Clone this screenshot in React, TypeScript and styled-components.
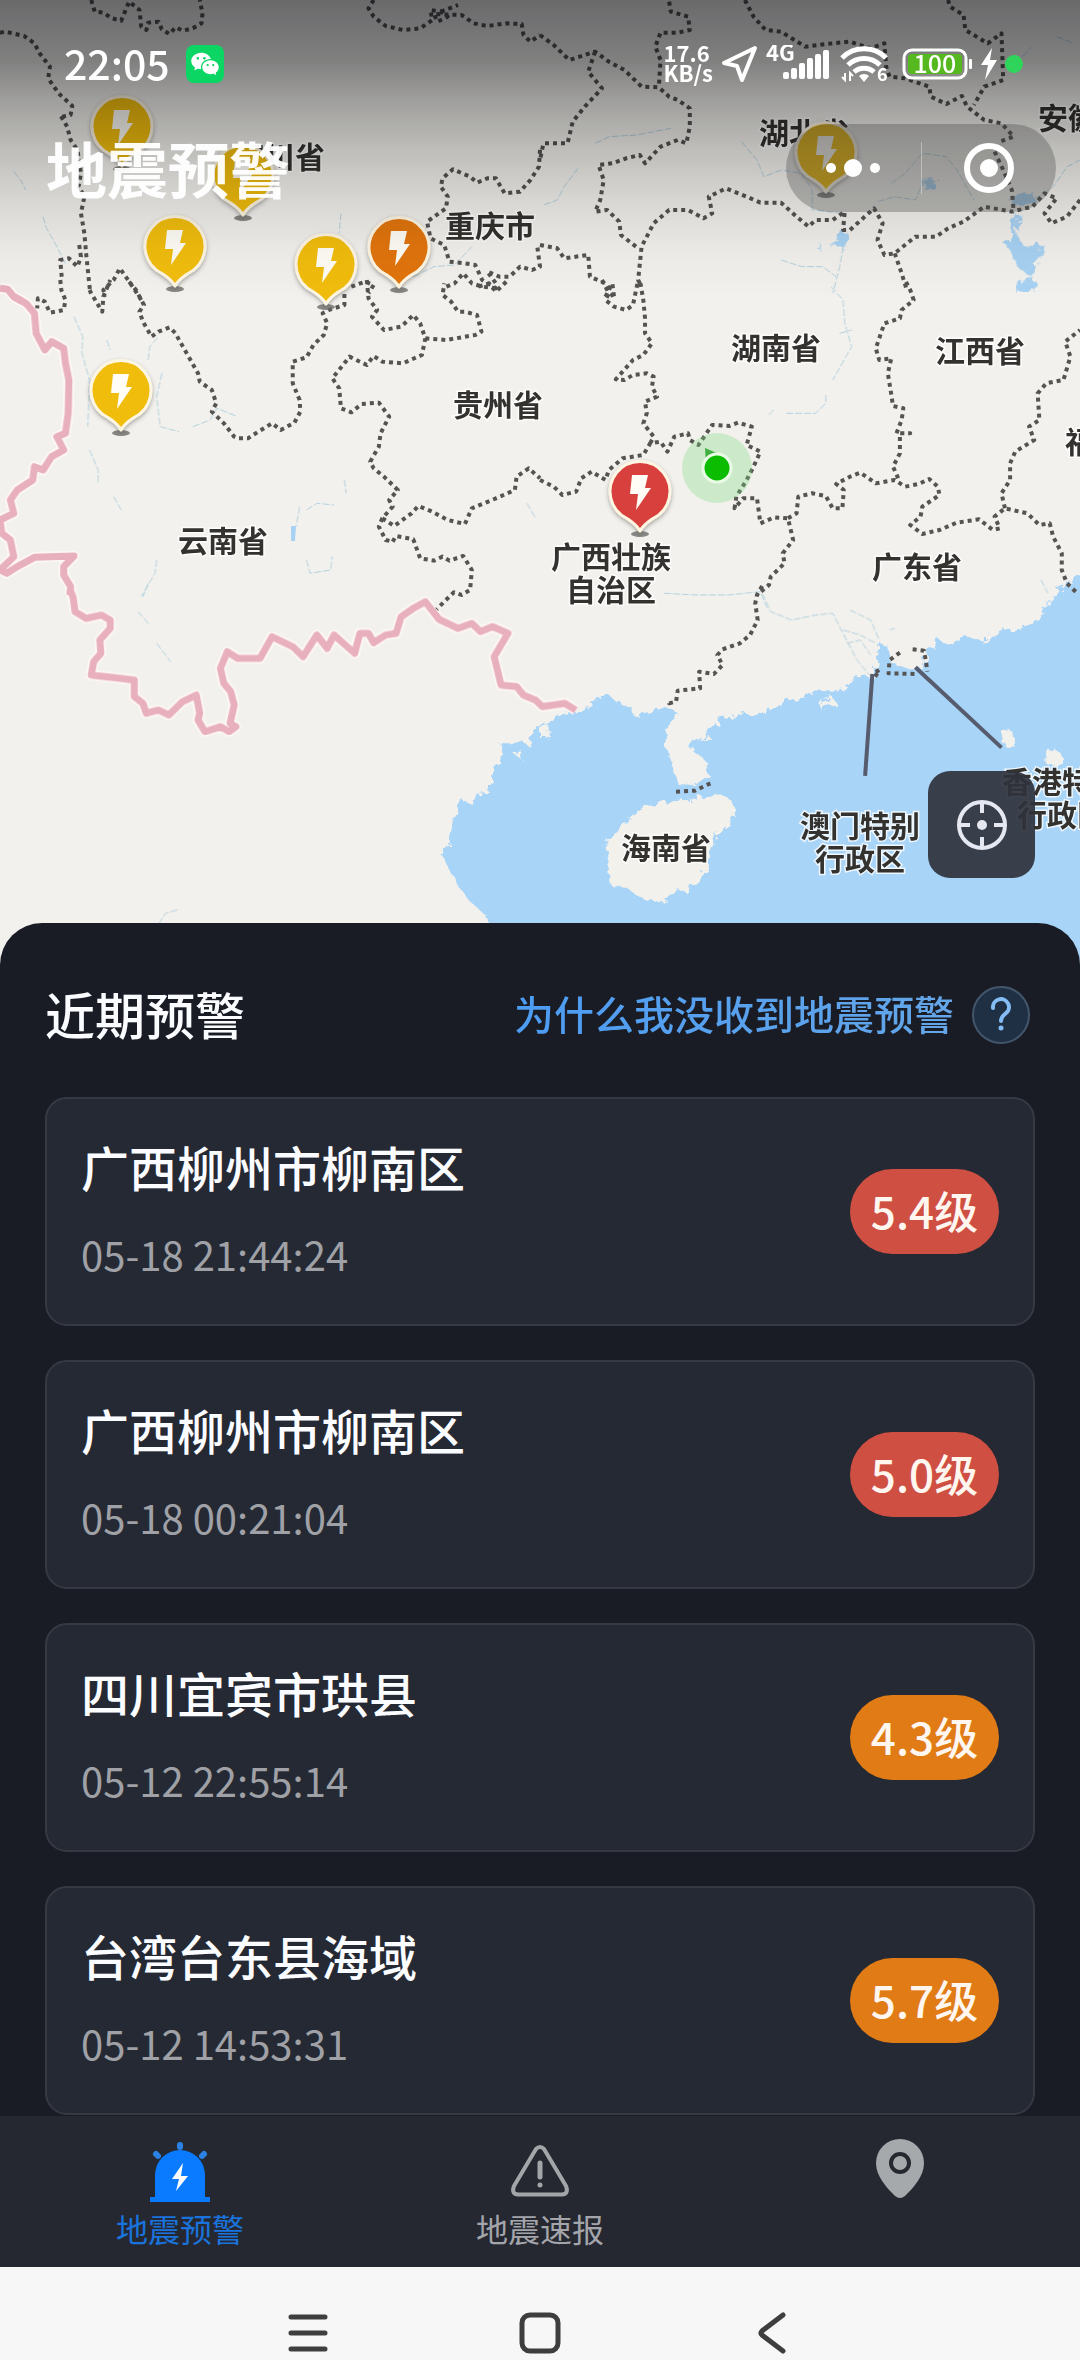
import React from 'react';
import styled, { createGlobalStyle } from 'styled-components';
import { RiWechatFill } from 'react-icons/ri';

const GlobalStyle = createGlobalStyle`
    * {
        box-sizing: border-box;
    }

    body {
        margin: 0;
        background: #191c25;
        font-family: "Noto Sans CJK SC", "Noto Sans", sans-serif;
    }

    button {
        padding: 0;
        border: 0;
        background: none;
        font: inherit;
        color: inherit;
    }

    svg {
        display: block;
        flex: none;
    }
`;

const Page = styled.div`
    display: flex;
    flex-direction: column;
    height: 100vh;
    overflow: hidden;
`;

const MapArea = styled.section`
    position: relative;
    flex: none;
    height: 966px;
    overflow: hidden;
    background: #f2f1ed;
`;

const MapDrawing = styled.svg`
    width: 100%;
    height: 100%;

    path, line {
        vector-effect: non-scaling-stroke;
    }
`;

const MapLabel = styled.text`
    font-size: 30px;
    font-weight: 700;
    fill: #33322f;
    stroke: #fff;
    stroke-width: 3px;
    stroke-opacity: 0.8;
    paint-order: stroke;
    text-anchor: middle;
`;

const Header = styled.header`
    position: absolute;
    top: 0;
    left: 0;
    right: 0;
    height: 300px;
    color: #fff;
    background: linear-gradient(
        rgba(0, 0, 6, 0.56) 0px,
        rgba(0, 0, 4, 0.47) 60px,
        rgba(0, 0, 2, 0.34) 100px,
        rgba(0, 0, 0, 0.21) 150px,
        rgba(0, 0, 0, 0.11) 200px,
        rgba(0, 0, 0, 0.03) 250px,
        rgba(0, 0, 0, 0) 300px
    );
`;

const StatusBar = styled.div`
    display: flex;
    align-items: center;
    justify-content: space-between;
    height: 124px;
    padding: 4px 57px 0 64px;
`;

const StatusGroup = styled.div<{ gap: number }>`
    display: flex;
    align-items: center;
    gap: ${props => props.gap}px;
`;

const Clock = styled.span`
    padding-bottom: 4px;
    font-size: 41px;
    font-weight: 500;
    line-height: 44px;
`;

const WechatBadge = styled.span`
    display: flex;
    align-items: center;
    justify-content: center;
    width: 38px;
    height: 38px;
    border-radius: 8px;
    background: #0bd563;
    font-size: 30px;
`;

const NetSpeed = styled.span`
    padding-bottom: 4px;
    font-size: 22px;
    font-weight: 700;
    line-height: 20px;
`;

const GreenDot = styled.span`
    width: 18px;
    height: 18px;
    border-radius: 50%;
    background: #2fd45b;
`;

const TitleBar = styled.div`
    display: flex;
    align-items: center;
    justify-content: space-between;
    height: 88px;
    padding: 0 24px 0 46px;
`;

const AppTitle = styled.h1`
    margin: 0;
    font-size: 61px;
    font-weight: 700;
    line-height: 88px;
    opacity: 0.95;
`;

const Capsule = styled.div`
    display: flex;
    align-items: center;
    width: 270px;
    height: 88px;
    border-radius: 44px;
    background: rgba(70, 70, 70, 0.34);
`;

const CapsuleButton = styled.button`
    display: flex;
    flex: 1;
    align-items: center;
    justify-content: center;
    height: 52px;

    & + & {
        border-left: 1px solid rgba(255, 255, 255, 0.35);
    }
`;

const LocateButton = styled.button`
    position: absolute;
    right: 45px;
    bottom: 88px;
    display: flex;
    align-items: center;
    justify-content: center;
    width: 107px;
    height: 107px;
    border-radius: 22px;
    background: rgba(47, 50, 60, 0.92);
`;

const Sheet = styled.main`
    position: relative;
    flex: 1;
    min-height: 0;
    margin-top: -43px;
    padding: 60px 45px 0;
    border-radius: 42px 42px 0 0;
    background: #191c25;
    overflow: hidden;
`;

const SheetHeader = styled.div`
    display: flex;
    align-items: center;
    justify-content: space-between;
    height: 64px;
    padding-right: 5px;
    margin-bottom: 50px;
`;

const SheetTitle = styled.h2`
    margin: 0;
    padding-bottom: 4px;
    font-size: 50px;
    font-weight: 500;
    line-height: 60px;
    color: #fafcff;
`;

const HelpLink = styled.a`
    display: flex;
    align-items: center;
    gap: 18px;
    text-decoration: none;
`;

const HelpText = styled.span`
    padding-bottom: 4px;
    font-size: 40px;
    font-weight: 500;
    line-height: 60px;
    color: transparent;
    background: linear-gradient(90deg, #4c9cf3, #64a6e8);
    background-clip: text;
`;

const HelpIcon = styled.span`
    display: flex;
    align-items: center;
    justify-content: center;
    width: 58px;
    height: 58px;
    border: 2px solid #41566b;
    border-radius: 50%;
    background: #1f3044;
`;

const AlertList = styled.ul`
    display: flex;
    flex-direction: column;
    gap: 34px;
    margin: 0;
    padding: 0;
    list-style: none;
`;

const AlertCard = styled.li`
    display: flex;
    align-items: center;
    justify-content: space-between;
    height: 229px;
    padding: 0 34px;
    border: 2px solid #363943;
    border-radius: 22px;
    background: #252933;
`;

const AlertText = styled.div`
    padding-bottom: 4px;
`;

const AlertPlace = styled.div`
    margin-bottom: 32px;
    font-size: 48px;
    font-weight: 500;
    line-height: 56px;
    color: #fafcff;
`;

const AlertTime = styled.time`
    display: block;
    font-size: 40px;
    line-height: 56px;
    color: #9fa1a6;
`;

const Magnitude = styled.span<{ color: string }>`
    display: flex;
    align-items: center;
    justify-content: center;
    width: 149px;
    height: 85px;
    padding-bottom: 4px;
    border-radius: 43px;
    font-size: 44px;
    font-weight: 500;
    color: #fff6ef;
    background: ${props => props.color};
`;

const TabBar = styled.nav`
    display: flex;
    flex: none;
    height: 151px;
    background: #252831;
`;

const Tab = styled.button<{ active?: boolean }>`
    display: flex;
    flex: 1;
    flex-direction: column;
    align-items: center;
    padding-top: 20px;
    color: ${props => props.active ? '#1a73dc' : '#a3a5ab'};
`;

const TabLabel = styled.span`
    font-size: 32px;
    font-weight: 400;
    line-height: 48px;
`;

const SystemNav = styled.div`
    display: flex;
    flex: none;
    align-items: flex-start;
    justify-content: center;
    gap: 190px;
    height: 93px;
    padding-top: 45px;
    background: #f7f7f7;
    overflow: hidden;
`;

interface MapTile {
    x: number;
    y: number;
    paths: string[];
}

// One map tile covers 540px of the map; its points run 0-1568 across and 3 to a pixel down.
const TILE_SCALE = 'scale(0.3444 0.3333)';

const borderTiles: MapTile[] = [
    {
        x: 0, y: 0, paths: [
            '265,0 275,35 300,38 325,55 352,62 375,5 405,30 410,80 425,90 430,68 460,65 470,88 492,102 510,82 530,92 560,85 585,70 588,40 580,0',
            '0,98 15,95 70,108 100,130 115,160 145,200 140,235 170,280 210,318 205,345 180,350 175,345 195,380 205,420 225,450 235,520 228,560 245,590 235,640 245,700 250,760 262,880',
            '1085,0 1070,25 1085,50 1120,78 1170,90 1220,85 1255,60 1250,30 1280,35 1300,50 1270,65 1260,42 1340,45 1375,70 1415,78 1470,70 1515,72 1520,105 1540,125 1568,105',
            '1280,35 1330,15',
            '1568,450 1565,500 1540,540 1510,575 1465,580 1440,535 1415,535 1385,548 1365,530 1315,508 1285,535 1280,560 1300,590 1295,625 1240,665 1250,715 1290,735 1305,785 1350,790 1380,795 1400,840 1440,865 1440,850 1415,815 1450,830 1480,830 1510,800 1545,810 1568,800 1560,740',
            '1440,865 1400,860 1370,850 1345,820 1320,850 1285,865',
            '1020,860 1060,845 1085,855 1070,880',
            '230,735 235,770 225,800 200,775 175,780 180,840',
            '410,900 385,860 348,805 330,840 300,870 305,890',
        ],
    },
    {
        x: 540, y: 0, paths: [
            '0,105 40,135 85,180 160,155 200,185 245,210 295,260 345,262 375,290 400,300 435,325 435,380 425,430 400,420 350,440 305,490 290,465 250,475 210,490 170,495 185,540 175,600 160,635 195,630 230,665 235,705 285,745',
            '375,5 380,35 430,50 435,90 400,98 350,98 335,140 350,180 345,262',
            '160,155 140,215 180,265 130,320 95,365 80,430 10,430 0,480',
            '595,0 620,50 655,90 700,95 770,140 830,132 900,125 960,145 1000,130 1005,200 1015,230 1060,235 1130,260 1135,290 1180,312 1225,288 1240,320 1290,360 1340,370 1375,410 1335,425',
            '1320,455 1345,510 1370,570 1375,630',
            '1185,0 1190,20 1230,45 1235,90 1300,130 1340,100 1345,240 1290,260 1260,315',
            '0,735 50,745 70,775 140,765 145,830 190,850 215,895',
            '290,850 285,840 295,740 330,670 375,630 430,630 475,655 500,640 490,590 540,565 600,590 640,608 700,608 745,650 780,680 800,660 850,660 885,635 880,690 900,690 970,625 995,670 980,720 1000,765 1030,760 1090,710 1150,710 1185,685 1230,665 1290,620 1370,635 1430,620 1465,580 1500,595 1465,640 1485,670 1530,650 1568,600',
            '1030,760 1050,820 1065,870',
        ],
    },
    {
        x: 0, y: 280, paths: [
            '175,0 178,30 190,60 185,90 145,98 130,65 110,55 108,85',
            '260,30 265,40 285,75 297,95 300,50 320,0',
            '375,5 395,30 418,75 405,95 415,125 440,170 460,155 492,142 510,160 520,180 545,225 575,280 580,305 615,330 628,370 615,395 650,430 680,470 690,475 720,475 750,455 790,430 815,450 855,428 872,395 870,360 850,310 850,245 890,232 910,195 940,165 950,130 937,100 960,88 1000,75 1000,40',
            '1065,0 1070,55 1095,90 1080,110 1115,150 1165,140 1200,105 1220,130 1235,175 1225,225 1170,250 1110,245 1085,228 1065,255 1015,230 965,295 985,325 990,385 1020,397 1050,372 1100,368 1130,410 1105,460 1100,500 1075,545 1085,565 1115,590 1155,630 1130,660 1140,680 1110,715 1100,740 1120,780 1140,785',
            '1110,715 1145,738 1195,700 1215,678 1255,695 1300,720 1350,732 1370,685 1440,655 1495,630 1500,590 1535,565 1568,595',
            '1140,785 1150,768 1200,778 1220,835 1260,842 1285,830 1305,842 1345,828 1370,870 1365,930 1340,945 1318,937 1290,965 1268,988',
            '1235,175 1295,180 1380,165 1398,155 1385,105 1350,95 1330,95 1310,65 1285,45 1290,10',
            '1390,20 1420,10 1440,35 1470,5',
        ],
    },
    {
        x: 540, y: 280, paths: [
            '0,600 40,620 65,645 105,635 120,595 150,575 190,600 200,570 240,535 300,525 320,490 350,485 370,515 390,470 430,460 435,480 460,495 500,435 550,438 575,428 615,440 600,495 640,515 620,560 600,600 570,650 565,685 590,655 630,655 640,730 680,712 720,715 735,780 705,820 710,850 670,890 665,915 630,945',
            '320,490 330,470 300,430 310,400 305,365 340,350 325,320 330,290 310,280 270,285 245,300 220,298 270,240 300,225 325,190 305,160 305,115 300,60 290,0',
            '180,0 200,40 190,60 215,80 250,90 270,75 285,0',
            '190,50 210,10 215,50',
            '720,715 745,700 750,650 790,640 830,648 850,685 878,685 882,630 860,612 900,590 930,578 975,610 1030,600 1060,620 1100,612 1130,597 1155,620 1160,645 1110,680 1105,710 1075,735 1110,762 1160,750 1210,728 1275,718 1315,750 1335,745 1320,710 1350,685 1415,700 1450,735 1480,730 1490,770 1515,820 1515,870 1530,910 1560,940',
            '1040,595 1025,560 1045,520 1045,460 1075,460 1035,460 1050,420 1055,385 1025,378 1018,330 1010,280 1020,235 985,240 975,205 1000,130 1045,115 1050,90 1085,60 1075,30 1060,0',
            '1350,685 1340,640 1365,600 1365,550 1380,515 1435,480 1420,440 1450,420 1445,340 1470,310 1520,300 1540,230 1525,185 1568,150',
        ],
    },
    {
        x: 540, y: 580, paths: [
            '645,18 630,45 625,70 632,120 610,165 580,190 530,208 515,225 530,255 505,282 462,275 465,325 400,332 395,365 375,370 375,360',
            '1045,218 1015,240 1012,280 1095,282',
            '1082,208 1115,212 1120,240 1125,275',
            '985,270 968,280 985,290',
            '395,635 450,632 505,605',
        ],
    },
];

const nationTiles: MapTile[] = [
    { x: 0, y: 0, paths: ['0,865 22,868 40,890 66,905'] },
    {
        x: 0, y: 280, paths: [
            '40,50 75,70 100,100 105,160 130,210 150,185 185,205 190,250 200,300 198,400 190,460 165,470 185,510 150,530 125,570 100,560 95,600 50,630 30,660 40,700 0,720 5,760 30,780 40,830 0,870 20,880 50,860 100,832 215,828 185,860 185,885 205,920 203,945',
        ],
    },
    {
        x: 0, y: 580, paths: [
            '203,30 212,50 218,95 250,115 295,105 320,120 320,145 290,180 293,220 272,245 265,285 350,295 390,300 390,350 415,370 425,400 460,390 490,405 530,365 570,345 580,400 575,420 595,455 640,440 665,455 685,440 668,430 680,375 670,335 650,310 640,265 660,215 690,235 755,235 790,170 850,200 880,230 920,165 950,205 970,165 1030,220 1045,160 1070,160 1085,188 1120,165 1150,160 1165,110 1200,85 1235,65 1275,118 1330,145 1370,130 1395,155 1430,140 1475,160 1435,230 1455,315 1500,320 1520,345 1555,360 1575,380 1640,370 1672,390',
        ],
    },
];

const riverTiles: MapTile[] = [
    {
        x: 0, y: 0, paths: [
            '40,515 60,540 75,570', '125,650 135,685 160,730 190,790', '990,640 985,700', '1150,815 1200,830 1260,800 1320,795 1370,740',
        ],
    },
    {
        x: 540, y: 0, paths: [
            '160,430 200,410 280,405 380,385', '110,505 70,560 50,600 10,615', '585,425 630,480 650,530 700,510 760,520 790,570 790,630 880,640',
            '980,605 1030,590 1090,600 1110,550 1160,540', '1020,550 1060,520 1110,460 1180,470 1210,510 1260,600', '1360,600 1450,590 1490,560 1530,500 1568,480',
            '700,780 760,800 820,800 860,830', '880,740 870,800 850,880', '1400,170 1430,140', '1500,110 1550,130',
        ],
    },
    {
        x: 0, y: 280, paths: [
            '215,110 240,170 238,220 260,300 255,440', '260,510 285,570 285,610', '310,180 320,210', '430,240 435,200 460,170', '470,280 455,350 465,440 520,455',
            '560,440 610,420 630,385 690,410', '330,650 352,690', '870,680 860,740', '1000,600 1005,640', '890,690 920,670 970,675', '455,840 450,880 410,950',
            '890,840 900,880 960,870 965,830', '1530,670 1555,715',
        ],
    },
    {
        x: 540, y: 280, paths: [
            '845,20 880,60 885,130 905,200 850,300', '870,160 905,150', '665,405 682,385', '715,400 800,400 830,370 830,340', '360,940 450,945 550,945 640,935 660,985',
        ],
    },
    {
        x: 540, y: 580, paths: [
            '645,40 670,95 730,120 800,105 850,100 880,160 920,240 960,290', '880,150 930,165 975,190', '900,90 960,120 985,180', '1455,0 1475,40',
            '890,190 930,180 960,225', '1015,150 1030,145',
        ],
    },
    { x: 0, y: 580, paths: ['400,95 435,135', '455,190 495,245', '430,10 415,50', '515,990 480,1000 462,1030'] },
];

const mapLabels = [
    { x: 280, y: 157, text: '四川省' },
    { x: 490, y: 226, text: '重庆市' },
    { x: 804, y: 133, text: '湖北省' },
    { x: 1083, y: 118, text: '安徽省' },
    { x: 776, y: 348, text: '湖南省' },
    { x: 980, y: 351, text: '江西省' },
    { x: 498, y: 405, text: '贵州省' },
    { x: 1110, y: 442, text: '福建省' },
    { x: 223, y: 541, text: '云南省' },
    { x: 611, y: 557, text: '广西壮族' },
    { x: 611, y: 590, text: '自治区' },
    { x: 917, y: 567, text: '广东省' },
    { x: 666, y: 848, text: '海南省' },
    { x: 860, y: 826, text: '澳门特别' },
    { x: 860, y: 859, text: '行政区' },
    { x: 1062, y: 782, text: '香港特别' },
    { x: 1062, y: 815, text: '行政区' },
];

const YELLOW = '#f1bd0b';
const ORANGE = '#e2740a';
const RED = '#d8403d';

const pins = [
    { x: 122, y: 126, color: YELLOW },
    { x: 243, y: 175, color: YELLOW },
    { x: 175, y: 246, color: YELLOW },
    { x: 326, y: 264, color: YELLOW },
    { x: 399, y: 247, color: ORANGE },
    { x: 826, y: 152, color: YELLOW },
    { x: 121, y: 390, color: YELLOW },
    { x: 640, y: 491, color: RED },
];

const alerts = [
    { place: '广西柳州市柳南区', time: '05-18 21:44:24', level: '5.4级', color: '#cf4f43' },
    { place: '广西柳州市柳南区', time: '05-18 00:21:04', level: '5.0级', color: '#cf4f43' },
    { place: '四川宜宾市珙县', time: '05-12 22:55:14', level: '4.3级', color: '#e07b16' },
    { place: '台湾台东县海域', time: '05-12 14:53:31', level: '5.7级', color: '#e07b16' },
];

const TileLines = ({ tiles, stroke, width, dash }: { tiles: MapTile[], stroke: string, width: number, dash?: string }) => (
    <g fill="none" stroke={stroke} strokeWidth={width} strokeDasharray={dash} strokeLinejoin="round">
        {tiles.map(tile => (
            <g key={`${tile.x}-${tile.y}`} transform={`translate(${tile.x} ${tile.y}) ${TILE_SCALE}`}>
                {tile.paths.map(points => <path key={points} d={`M${points}`} />)}
            </g>
        ))}
    </g>
);

const Pin = ({ x, y, color }: { x: number, y: number, color: string }) => (
    <g transform={`translate(${x} ${y})`}>
        <ellipse cx="0" cy="43" rx="9" ry="3" fill="#6d6d6a" opacity="0.8" />
        <path
            d="M0 40C-3 34-8 31-13 27.500A30 30 0 1 1 13 27.500C8 31 3 34 0 40Z"
            fill={color}
            stroke="#fff6e2"
            strokeWidth="3"
            strokeLinejoin="round"
            filter="url(#pinShadow)"
        />
        <path d="M-8-16H8L5-3H11L-4 19L-2 3H-10Z" fill="#fffdf6" />
    </g>
);

const ProvinceMap = () => (
    <MapDrawing viewBox="0 0 1080 966" preserveAspectRatio="xMidYMin slice" role="img" aria-label="地震预警地图">
        <defs>
            <filter id="coast" x="-5%" y="-5%" width="110%" height="110%">
                <feTurbulence type="fractalNoise" baseFrequency="0.12" numOctaves="3" seed="4" />
                <feDisplacementMap in="SourceGraphic" scale="12" />
            </filter>
            <filter id="pinShadow" x="-30%" y="-30%" width="160%" height="160%">
                <feDropShadow dx="0" dy="2" stdDeviation="2" floodColor="#444" floodOpacity="0.45" />
            </filter>
        </defs>
        <rect width="1080" height="966" fill="#f2f1ed" />
        <g filter="url(#coast)">
            <g transform={`translate(0 580) ${TILE_SCALE}`} fill="#a8d4f8">
                <path d="M1430,1200 1420,1050 1415,1010 1360,960 1325,910 1300,860 1283,825 1305,790 1315,720 1335,665 1375,660 1430,615 1435,565 1465,530 1450,490 1530,490 1560,440 1618,405 1678,395 1718,375 1743,345 1768,345 1793,370 1828,375 1838,405 1898,395 1933,380 1968,400 1943,425 1930,490 1953,560 1968,612 2018,615 2058,585 2048,540 2008,510 2008,480 2068,450 2093,415 2138,408 2258,385 2288,360 2348,355 2358,330 2418,335 2458,320 2498,285 2533,290 2548,250 2553,200 2573,190 2588,250 2628,265 2678,265 2693,215 2728,180 2758,200 2798,165 2858,185 2888,160 2968,140 3018,125 3028,85 3068,45 3100,0 3200,-40 3200,1200Z" />
                <path
                    d="M1843,700 1868,680 1938,665 1998,660 2068,645 2088,640 2123,660 2138,690 2113,735 2083,760 2058,830 2058,870 1998,925 1948,945 1918,970 1858,950 1818,925 1773,915 1768,870 1760,790 1808,730Z"
                    fill="#f3f1ec"
                />
                <path d="M1490,520 1515,512 1510,535Z M1568,440 1590,430 1600,470 1568,475Z M2380,370 2420,350 2425,370 2380,385Z M2020,478 2060,465 2065,480Z M2600,225 2640,215 2660,240 2630,250Z" fill="#f3f1ec" />
            </g>
            <g transform={`translate(540 0) ${TILE_SCALE}`} fill="#a8d2f3">
                <path d="M870,690 895,700 885,740 850,745 865,720Z M1375,640 1395,640 1382,700 1400,735 1465,735 1440,800 1425,830 1385,800 1360,740 1345,730 1370,710Z M1385,845 1440,835 1425,880 1385,880Z M1115,545 1140,530 1145,565 1115,570Z M1370,590 1430,575 1440,605 1370,615Z M800,740 815,730 815,748Z" />
            </g>
            <ellipse cx="1008" cy="738" rx="6" ry="9" fill="#f3f1ec" />
            <ellipse cx="1053" cy="758" rx="9" ry="8" fill="#f3f1ec" />
        </g>
        <path d="M291 526h5l-1 15h-4Z" fill="#a8d2f3" />
        <TileLines tiles={riverTiles} stroke="#b5d1df" width={1} dash="7 2" />
        <TileLines tiles={nationTiles} stroke="#fcf7f4" width={11} />
        <TileLines tiles={nationTiles} stroke="#e8b0bd" width={7} />
        <TileLines tiles={borderTiles} stroke="#555453" width={4} dash="4 4" />
        <g transform={`translate(540 580) ${TILE_SCALE}`} stroke="#565c6d" strokeWidth="4">
            <line x1="965" y1="282" x2="944" y2="588" />
            <line x1="1090" y1="262" x2="1340" y2="503" />
        </g>
        {mapLabels.map(label => (
            <MapLabel key={`${label.x}-${label.y}`} x={label.x} y={label.y + 11}>{label.text}</MapLabel>
        ))}
        <circle cx="717" cy="468" r="35" fill="#7ddd7d" opacity="0.32" />
        <path d="M705 448l14 6-13 10Z" fill="#3fae3f" />
        <circle cx="717" cy="468" r="14" fill="#0bbc00" stroke="#e9fbe6" strokeWidth="3" />
        {pins.map(pin => <Pin key={`${pin.x}-${pin.y}`} {...pin} />)}
    </MapDrawing>
);

const SendIcon = () => (
    <svg width="37" height="38" viewBox="0 0 37 38" fill="none" stroke="#fff" strokeWidth="4" strokeLinejoin="round">
        <path d="M34 3L3 18L16 21L21 35Z" />
    </svg>
);

const SignalIcon = () => (
    <svg width="66" height="38" viewBox="0 0 66 38" fill="#fff">
        <text x="0" y="16" fontSize="22" fontWeight="700">4G</text>
        <rect x="17" y="27" width="6" height="7" rx="2" />
        <rect x="25" y="23" width="6" height="11" rx="2" />
        <rect x="33" y="18" width="6" height="16" rx="2" />
        <rect x="41" y="13" width="6" height="21" rx="2" />
        <rect x="49" y="9" width="6" height="25" rx="2" />
        <rect x="57" y="5" width="6" height="29" rx="2" />
    </svg>
);

const WifiIcon = () => (
    <svg width="54" height="38" viewBox="0 0 54 38" fill="none" stroke="#fff" strokeWidth="5">
        <path d="M2 13A31 31 0 0 1 46 13M8 20A23 23 0 0 1 40 20M14 27A15 15 0 0 1 34 27" />
        <path d="M19 31A7 7 0 0 1 29 31L24 37Z" fill="#fff" stroke="none" />
        <path d="M5 28V35L2 32M10 36V28L13 31" strokeWidth="2" />
        <text x="37" y="36" fontSize="18" fontWeight="700" fill="#fff" stroke="none">6</text>
    </svg>
);

const BatteryIcon = () => (
    <svg width="71" height="32" viewBox="0 0 71 32">
        <rect x="2" y="2" width="62" height="28" rx="8" fill="none" stroke="#fff" strokeWidth="3" />
        <rect x="6" y="6" width="54" height="20" rx="4" fill="#55b81f" />
        <rect x="67" y="11" width="3" height="10" rx="1" fill="#fff" />
        <text x="33" y="25" fontSize="25" fontWeight="500" textAnchor="middle" fill="#fff">100</text>
    </svg>
);

const BoltIcon = () => (
    <svg width="16" height="32" viewBox="0 0 16 32" fill="#fff">
        <path d="M11 0L0 17H7L4 32L16 12H9Z" />
    </svg>
);

const LocateIcon = () => (
    <svg width="52" height="52" viewBox="0 0 52 52" fill="none" stroke="#e6e8f1" strokeWidth="4">
        <circle cx="26" cy="26" r="23" />
        <path d="M26 3V14M26 38V49M3 26H14M38 26H49" />
        <circle cx="26" cy="26" r="5" fill="#e6e8f1" stroke="none" />
    </svg>
);

const AlarmIcon = () => (
    <svg width="64" height="68" viewBox="0 0 64 68" fill="#0a7aff">
        <path d="M7 61V39A25 25 0 0 1 57 39V61H62V66H2V61Z" />
        <g stroke="#2a82e6" strokeWidth="6" strokeLinecap="round">
            <path d="M32 9V11M8 18L10 20M56 18L54 20" />
        </g>
        <path d="M35 27L24 43H31L28 55L40 40H33Z" fill="#fff" />
    </svg>
);

const WarningIcon = () => (
    <svg width="64" height="68" viewBox="0 0 64 68" fill="none" stroke="#a3a6a8" strokeWidth="4" strokeLinejoin="round" strokeLinecap="round">
        <path d="M28 13Q32 9 36 13L58 50Q61 58 54 58.500H10Q3 58 6 50Z" />
        <path d="M32 27V41" strokeWidth="5" />
        <path d="M32 49V49" strokeWidth="5" />
    </svg>
);

const PlaceIcon = () => (
    <svg width="64" height="68" viewBox="0 0 64 68">
        <path d="M32 3A24 24 0 0 1 56 27C56 40 46 51 37 60Q32 64 27 60C18 51 8 40 8 27A24 24 0 0 1 32 3Z" fill="#a5a9ac" />
        <circle cx="32" cy="27" r="9" fill="none" stroke="#25292f" strokeWidth="4" />
    </svg>
);

const App = () => {
    return (
        <>
            <GlobalStyle />
            <Page>
                <MapArea>
                    <ProvinceMap />
                    <Header>
                        <StatusBar>
                            <StatusGroup gap={16}>
                                <Clock>22:05</Clock>
                                <WechatBadge><RiWechatFill /></WechatBadge>
                            </StatusGroup>
                            <StatusGroup gap={8}>
                                <NetSpeed>17.6<br />KB/s</NetSpeed>
                                <SendIcon />
                                <SignalIcon />
                                <WifiIcon />
                                <BatteryIcon />
                                <BoltIcon />
                                <GreenDot />
                            </StatusGroup>
                        </StatusBar>
                        <TitleBar>
                            <AppTitle>地震预警</AppTitle>
                            <Capsule>
                                <CapsuleButton aria-label="更多">
                                    <svg width="56" height="20" viewBox="0 0 56 20" fill="#fff">
                                        <circle cx="6" cy="10" r="5" />
                                        <circle cx="28" cy="10" r="9" />
                                        <circle cx="50" cy="10" r="5" />
                                    </svg>
                                </CapsuleButton>
                                <CapsuleButton aria-label="关闭">
                                    <svg width="52" height="52" viewBox="0 0 52 52">
                                        <circle cx="26" cy="26" r="22" fill="none" stroke="#fff" strokeWidth="6" />
                                        <circle cx="26" cy="26" r="9" fill="#fff" />
                                    </svg>
                                </CapsuleButton>
                            </Capsule>
                        </TitleBar>
                    </Header>
                    <LocateButton aria-label="定位"><LocateIcon /></LocateButton>
                </MapArea>
                <Sheet>
                    <SheetHeader>
                        <SheetTitle>近期预警</SheetTitle>
                        <HelpLink href="#help">
                            <HelpText>为什么我没收到地震预警</HelpText>
                            <HelpIcon>
                                <svg width="30" height="36" viewBox="0 0 30 36" fill="none" stroke="#84bdf5" strokeWidth="4" strokeLinecap="round">
                                    <path d="M7 11A8 8 0 1 1 19 17Q15 20 15 24" />
                                    <path d="M15 31V31" strokeWidth="5" />
                                </svg>
                            </HelpIcon>
                        </HelpLink>
                    </SheetHeader>
                    <AlertList>
                        {alerts.map(alert => (
                            <AlertCard key={alert.time}>
                                <AlertText>
                                    <AlertPlace>{alert.place}</AlertPlace>
                                    <AlertTime>{alert.time}</AlertTime>
                                </AlertText>
                                <Magnitude color={alert.color}>{alert.level}</Magnitude>
                            </AlertCard>
                        ))}
                    </AlertList>
                </Sheet>
                <TabBar>
                    <Tab active>
                        <AlarmIcon />
                        <TabLabel>地震预警</TabLabel>
                    </Tab>
                    <Tab>
                        <WarningIcon />
                        <TabLabel>地震速报</TabLabel>
                    </Tab>
                    <Tab aria-label="位置">
                        <PlaceIcon />
                    </Tab>
                </TabBar>
                <SystemNav>
                    <button aria-label="菜单">
                        <svg width="42" height="42" viewBox="0 0 42 42" stroke="#3e3e3e" strokeWidth="5" strokeLinecap="round">
                            <path d="M4 5H38M4 21H38M4 37H38" />
                        </svg>
                    </button>
                    <button aria-label="主页">
                        <svg width="42" height="42" viewBox="0 0 42 42" fill="none" stroke="#3e3e3e" strokeWidth="5">
                            <rect x="3" y="3" width="36" height="36" rx="8" />
                        </svg>
                    </button>
                    <button aria-label="返回">
                        <svg width="42" height="42" viewBox="0 0 42 42" fill="none" stroke="#3e3e3e" strokeWidth="5" strokeLinecap="round">
                            <path d="M32 3L11 19Q9 21 11 23L32 39" />
                        </svg>
                    </button>
                </SystemNav>
            </Page>
        </>
    );
};

export default App;
